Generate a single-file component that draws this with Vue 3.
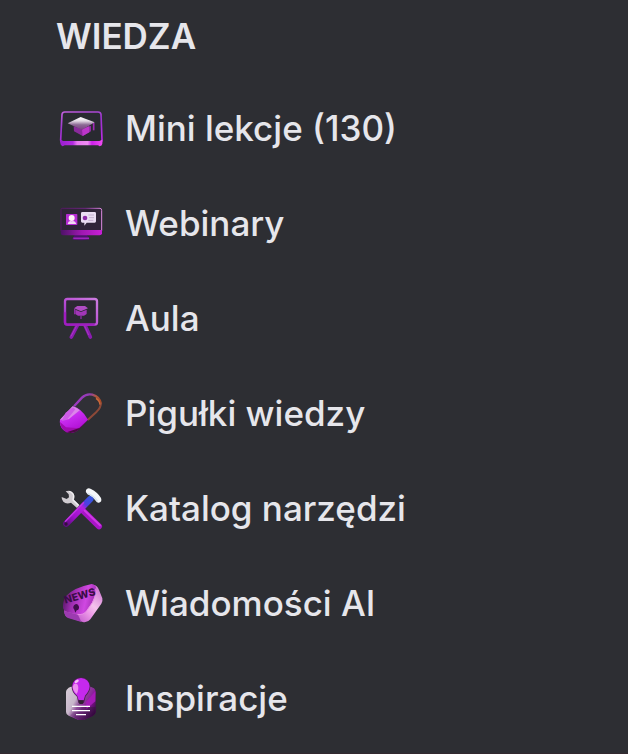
<template>
  <nav class="side-menu" aria-labelledby="menu-title">
    <h2 id="menu-title" class="menu-title">WIEDZA</h2>

    <ul class="menu-list">
      <li v-for="item in items" :key="item.icon">
        <a href="#" class="menu-link">
          <!-- Laptop -->
          <svg v-if="item.icon === 'lessons'" class="menu-icon" viewBox="21 18 132 132" aria-hidden="true">
            <defs>
              <linearGradient id="lessons-frame" x1="0" y1="0" x2="0.4" y2="1">
                <stop offset="0" stop-color="#c060dc" />
                <stop offset="0.5" stop-color="#9a34cc" />
                <stop offset="1" stop-color="#b52be0" />
              </linearGradient>
              <linearGradient id="lessons-base" x1="0" y1="0" x2="1" y2="0">
                <stop offset="0" stop-color="#9a1fd0" />
                <stop offset="0.3" stop-color="#b32be0" />
                <stop offset="0.4" stop-color="#e878f0" />
                <stop offset="0.65" stop-color="#ee8cf2" />
                <stop offset="0.75" stop-color="#cc20ea" />
                <stop offset="1" stop-color="#f04cf0" />
              </linearGradient>
              <linearGradient id="lessons-cap" x1="0" y1="0" x2="0" y2="1">
                <stop offset="0" stop-color="#ffffff" />
                <stop offset="0.3" stop-color="#e4dce6" />
                <stop offset="0.6" stop-color="#8c6a94" />
                <stop offset="1" stop-color="#7c3a88" />
              </linearGradient>
            </defs>
            <path d="M38 36H138Q146 36 147 43L150 120Q150 128 142 128H34Q26 128 26 120L30 43Q31 36 38 36Z" fill="#292a30" stroke="url(#lessons-frame)" stroke-width="5" />
            <path d="M25 119L34 123H142L151 119V131Q150 137 143 139L138 136H38L32 139Q25 136 25 130Z" fill="url(#lessons-base)" />
            <path d="M65 79L90 88L117 77V94L92 108L66 94Z" fill="#8a2a9c" />
            <path d="M90 88L112 78V97L92 108Z" fill="#bd35cb" />
            <path d="M47 70L86 51L128 67L90 90Z" fill="url(#lessons-cap)" />
            <path d="M125 69V91" stroke="#a02bb5" stroke-width="5" />
          </svg>

          <!-- Monitor -->
          <svg v-else-if="item.icon === 'webinars'" class="menu-icon" viewBox="21 15 132 132" aria-hidden="true">
            <defs>
              <linearGradient id="webinars-edge" x1="0" y1="0" x2="1" y2="0">
                <stop offset="0" stop-color="#51195f" />
                <stop offset="0.6" stop-color="#6c2780" />
                <stop offset="1" stop-color="#dc8be0" />
              </linearGradient>
              <linearGradient id="webinars-base" x1="0" y1="0" x2="1" y2="0">
                <stop offset="0" stop-color="#4c1266" />
                <stop offset="0.5" stop-color="#9d18b0" />
                <stop offset="1" stop-color="#c81fd6" />
              </linearGradient>
            </defs>
            <path d="M68 117H105L113 130Q88 136 60 130Z" fill="#4b126b" />
            <path d="M64 127H111" stroke="#9d23bd" stroke-width="5" />
            <path d="M30 37H144Q149 37 149 43V105H27V41Q27 37 30 37Z" fill="#302439" stroke="url(#webinars-edge)" stroke-width="3" />
            <path d="M26 102H150V112Q149 118 143 118H32Q26 117 26 111Z" fill="url(#webinars-base)" />
            <rect x="42" y="54" width="34" height="33" rx="2" fill="#b72bd5" />
            <circle cx="59" cy="66" r="9" fill="#fff0f7" />
            <path d="M47 84Q49 73 59 76Q70 73 73 84Z" fill="#f3d7f4" />
            <path d="M91 48H128Q132 48 132 52V76Q132 80 128 80H104L97 89V80H91Q87 80 87 76V52Q87 48 91 48Z" fill="#eadcf2" />
            <circle cx="99" cy="66" r="7" fill="#8d29a9" />
            <path d="M109 57H126M111 65H126M109 73H124" stroke="#c4b0d0" stroke-width="3" />
          </svg>

          <!-- Board on a stand -->
          <svg v-else-if="item.icon === 'hall'" class="menu-icon" viewBox="21 18 132 132" aria-hidden="true">
            <defs>
              <linearGradient id="hall-frame" x1="0" y1="1" x2="1" y2="0">
                <stop offset="0" stop-color="#8e22be" />
                <stop offset="0.5" stop-color="#bc52d6" />
                <stop offset="1" stop-color="#cc7ce0" />
              </linearGradient>
            </defs>
            <path d="M76 106L58 141M99 106L115 141" stroke="#8a1cb0" stroke-width="11" stroke-linecap="round" />
            <path d="M74 107L57 139M98 108L110 135" stroke="#aa35c4" stroke-width="3" />
            <rect x="39" y="27" width="96" height="77" rx="7" fill="#2b2932" stroke="url(#hall-frame)" stroke-width="7" />
            <path d="M39 67V98Q40 104 46 104H128" fill="none" stroke="#a01cc0" stroke-width="7" />
            <path d="M66 55L76 48H99L108 55L87 64Z" fill="#b04cc4" />
            <path d="M70 59L87 66L104 59V72L96 77H78L70 72Z" fill="#a236b8" />
            <path d="M68 56V73M87 76V87" stroke="#8c2ea4" stroke-width="4" />
          </svg>

          <!-- Capsule -->
          <svg v-else-if="item.icon === 'pills'" class="menu-icon" viewBox="21 15 132 132" aria-hidden="true">
            <defs>
              <linearGradient id="pills-shell" x1="0" y1="0" x2="1" y2="0.4">
                <stop offset="0" stop-color="#b32bd8" />
                <stop offset="0.5" stop-color="#8e3fb0" />
                <stop offset="0.75" stop-color="#b0583e" />
                <stop offset="1" stop-color="#a84a28" />
              </linearGradient>
              <linearGradient id="pills-body" x1="0.2" y1="0" x2="0.7" y2="1">
                <stop offset="0" stop-color="#d978ec" />
                <stop offset="0.4" stop-color="#c82cf0" />
                <stop offset="0.8" stop-color="#b414d8" />
                <stop offset="1" stop-color="#700c84" />
              </linearGradient>
            </defs>
            <path d="M64 62L88 35Q101 20 121 24Q145 31 148 52Q149 63 136 76L107 102Z" fill="#303036" />
            <path d="M66 61L90 35Q103 22 121 26Q143 32 147 54" fill="none" stroke="url(#pills-shell)" stroke-width="7" />
            <path d="M147 50Q147 64 134 77L107 102" fill="none" stroke="#8d4938" stroke-width="6" />
            <path d="M132 37Q143 44 144 56" fill="none" stroke="#cc6a3b" stroke-width="4" />
            <path d="M62 61Q88 66 108 101L79 132Q64 146 44 139Q20 126 24 101Z" fill="url(#pills-body)" />
            <path d="M62 61Q75 65 83 73L50 100L24 101Z" fill="#dc86ea" />
            <path d="M41 80L63 64L70 70L45 101L29 105Z" fill="#cf5ce8" />
            <path d="M24 108L42 124L82 127Q64 146 44 139Q25 128 24 108Z" fill="#a00caf" />
            <path d="M44 139L82 126L108 101L80 132Q62 146 44 139Z" fill="#4a0b42" />
          </svg>

          <!-- Wrench and hammer -->
          <svg v-else-if="item.icon === 'tools'" class="menu-icon" viewBox="21 18 132 132" aria-hidden="true">
            <defs>
              <linearGradient id="tools-handle" x1="1" y1="0" x2="0" y2="1">
                <stop offset="0" stop-color="#3854dc" />
                <stop offset="0.2" stop-color="#503ce0" />
                <stop offset="0.34" stop-color="#b51fe0" />
                <stop offset="0.7" stop-color="#a010cc" />
                <stop offset="1" stop-color="#620c85" />
              </linearGradient>
            </defs>
            <path d="M92 91L141 139" stroke="#a814c8" stroke-width="18" stroke-linecap="round" />
            <path d="M97 91L144 136" stroke="#cf39e5" stroke-width="6" stroke-linecap="round" />
            <path d="M29 51L44 57L51 52L50 43L41 34Q56 29 65 41Q69 49 66 59L83 76L75 84L57 68Q43 74 34 65Q28 59 29 51Z" fill="#cfcbd0" />
            <path d="M51 34Q63 37 65 47L63 60L79 76" fill="none" stroke="#f1eff2" stroke-width="4" />
            <path d="M115 57L43 131" stroke="url(#tools-handle)" stroke-width="19" stroke-linecap="round" />
            <path d="M96 67L39 125" stroke="#c433e5" stroke-width="4" />
            <circle cx="42" cy="132" r="5" fill="#34103f" />
            <path d="M102 30Q107 22 117 27Q137 37 147 54Q151 66 141 68Q135 69 131 62Q121 48 106 42Q99 37 102 30Z" fill="#f5f7fa" />
            <path d="M106 40Q124 46 137 64" fill="none" stroke="#d4e2ee" stroke-width="4" />
          </svg>

          <!-- News block -->
          <svg v-else-if="item.icon === 'news'" class="menu-icon" viewBox="21 15 132 132" aria-hidden="true">
            <defs>
              <linearGradient id="news-face" x1="0" y1="0.3" x2="1" y2="0.5">
                <stop offset="0" stop-color="#501660" />
                <stop offset="0.3" stop-color="#9a2cad" />
                <stop offset="0.7" stop-color="#d048e2" />
                <stop offset="1" stop-color="#9a2bab" />
              </linearGradient>
              <linearGradient id="news-side" x1="0" y1="1" x2="1" y2="0">
                <stop offset="0" stop-color="#a32bb8" />
                <stop offset="0.45" stop-color="#ed9ae8" />
                <stop offset="0.6" stop-color="#f4c3ec" />
                <stop offset="1" stop-color="#c764cd" />
              </linearGradient>
            </defs>
            <path d="M36 104L126 27Q136 29 141 42L151 67Q153 75 148 83L115 130Q107 141 92 138L47 124Q38 120 36 104Z" fill="url(#news-side)" />
            <path d="M43 59Q68 34 119 24Q132 25 133 40Q132 58 120 80L105 103Q95 119 75 115L46 108Q31 103 33 88Q34 70 43 59Z" fill="url(#news-face)" />
            <path d="M131 38Q135 51 121 80L105 103Q95 119 75 115" fill="none" stroke="#e98be8" stroke-width="3" />
            <path d="M36 105L78 116L88 138L48 126Q37 121 36 105Z" fill="#9c3bb0" />
            <text x="40" y="83" class="news-text" transform="rotate(-16 40 83)">NEWS</text>
            <path d="M66 88Q77 79 81 92Q82 101 74 103L70 110L67 101Q61 95 66 88Z" fill="#3e0d4a" />
          </svg>

          <!-- Bulb and note -->
          <svg v-else class="menu-icon" viewBox="21 18 132 132" aria-hidden="true">
            <defs>
              <linearGradient id="ideas-card" x1="0" y1="0" x2="1" y2="0.6">
                <stop offset="0" stop-color="#d8ced9" />
                <stop offset="0.4" stop-color="#c7b6ca" />
                <stop offset="0.55" stop-color="#8c4c97" />
                <stop offset="0.8" stop-color="#8d169f" />
                <stop offset="1" stop-color="#4c0b58" />
              </linearGradient>
              <linearGradient id="ideas-shade" x1="0" y1="0" x2="1" y2="0.4">
                <stop offset="0" stop-color="#b79fbc" />
                <stop offset="0.45" stop-color="#6a2878" />
                <stop offset="1" stop-color="#35073e" />
              </linearGradient>
            </defs>
            <path d="M42 66Q42 59 50 53L57 50H116L126 55Q131 59 131 67V127Q130 134 122 138L96 149Q87 153 78 149L50 137Q42 134 42 126Z" fill="url(#ideas-card)" />
            <path d="M54 136L88 110L131 111V127Q130 134 122 138L96 149Q87 153 78 149Z" fill="url(#ideas-shade)" />
            <path d="M102 96L130 64V94L104 116Z" fill="#a51bb7" />
            <path d="M59 48Q61 24 87 22Q112 24 115 49Q115 64 101 79L96 98Q87 106 79 98L75 80Q58 66 59 48Z" fill="#49204f" />
            <path d="M61 48Q64 26 87 24Q111 26 113 49Q112 64 99 77L95 91H80L76 78Q61 66 61 48Z" fill="#c529ee" />
            <path d="M62 50Q67 35 77 44Q82 57 74 72Q63 63 62 50Z" fill="#ed8cf1" />
            <ellipse cx="74" cy="34" rx="7" ry="4" fill="#f5bdf5" transform="rotate(-32 74 34)" />
            <path d="M80 91H95L92 102H83Z" fill="#302132" />
            <path d="M60 109H114M60 122H114M72 134H102" stroke="#ffffff" stroke-width="4" />
          </svg>

          <span>{{ item.label }}</span>
        </a>
      </li>
    </ul>
  </nav>
</template>

<script setup>
const items = [
  { icon: 'lessons', label: 'Mini lekcje (130)' },
  { icon: 'webinars', label: 'Webinary' },
  { icon: 'hall', label: 'Aula' },
  { icon: 'pills', label: 'Pigułki wiedzy' },
  { icon: 'tools', label: 'Katalog narzędzi' },
  { icon: 'news', label: 'Wiadomości AI' },
  { icon: 'ideas', label: 'Inspiracje' }
]
</script>

<style>
body {
  margin: 0;
  background: #2d2e33;
}
</style>

<style scoped>
.side-menu {
  padding: 14px 24px 8px 56px;
  border-bottom: 1px solid #33292f;
  color: #e6e6eb;
  font-family: Inter, sans-serif;
  font-size: 35px;
  line-height: 44px;
}

.menu-title {
  margin: 0 0 22px;
  font-size: 35px;
  font-weight: 600;
}

.menu-list {
  margin: 0;
  padding: 0;
  list-style: none;
}

.menu-link {
  display: flex;
  align-items: center;
  gap: 22px;
  height: 95px;
  padding-left: 3px;
  color: inherit;
  font-weight: 500;
  text-decoration: none;
}

.menu-icon {
  flex: none;
  width: 44px;
  height: 44px;
}

.news-text {
  fill: #3b0d47;
  font-family: Inter, sans-serif;
  font-size: 31px;
  font-weight: 800;
}
</style>
